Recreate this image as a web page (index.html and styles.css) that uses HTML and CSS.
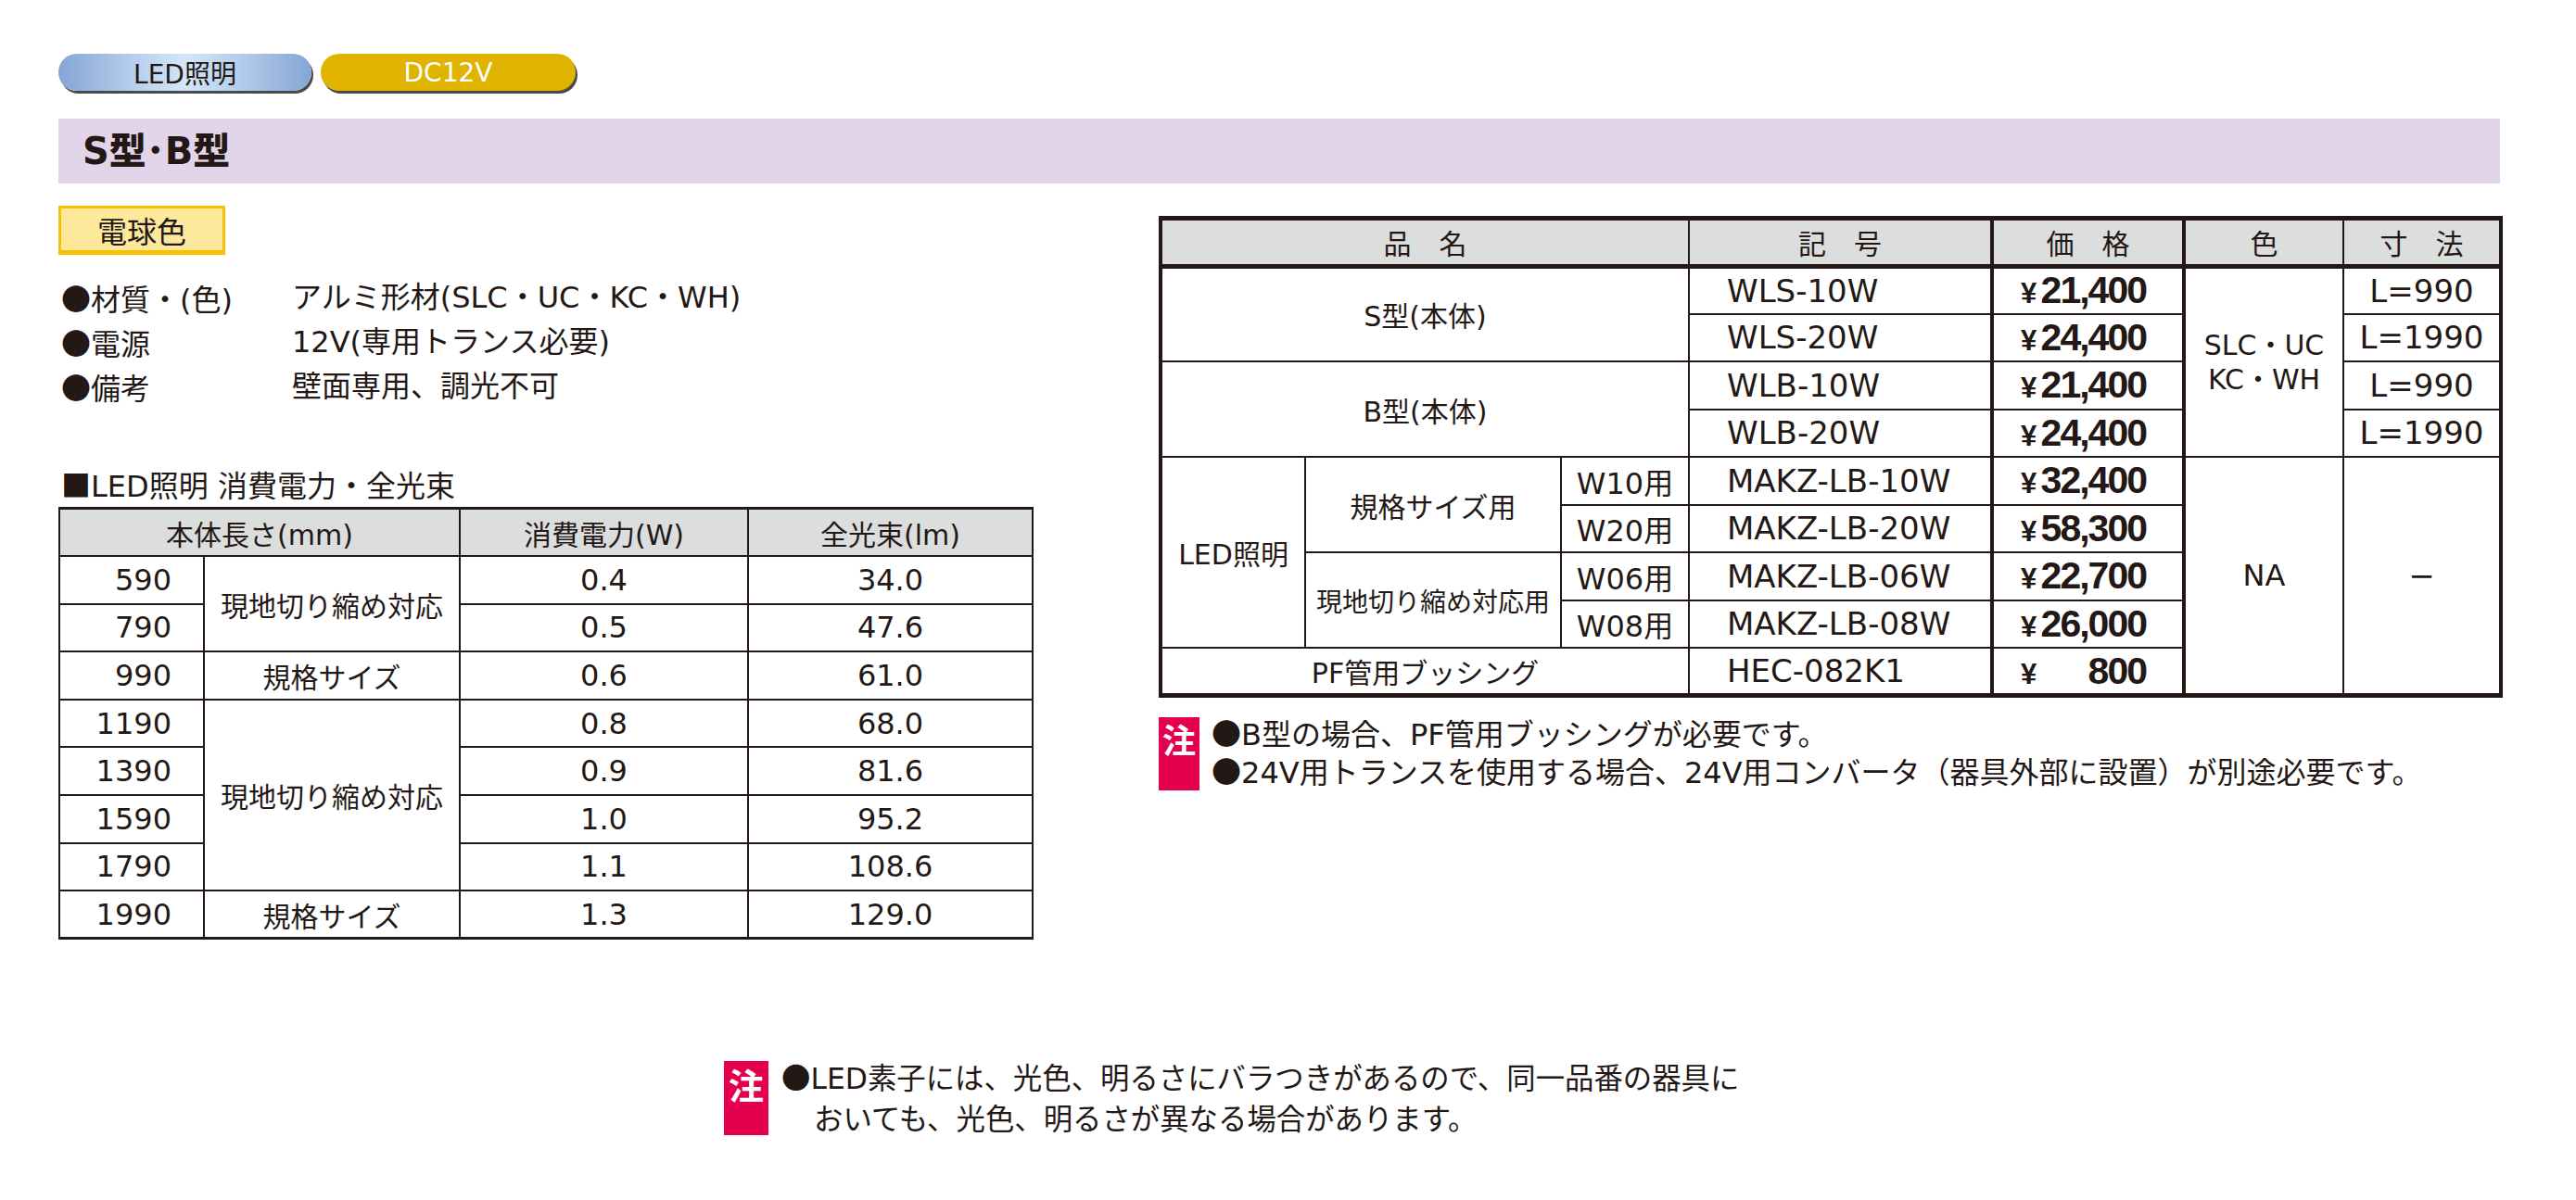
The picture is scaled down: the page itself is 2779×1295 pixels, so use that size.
FILE: index.html
```html
<!DOCTYPE html>
<html lang="ja">
<head>
<meta charset="utf-8">
<title>S型・B型</title>
<link rel="stylesheet" href="styles.css">
</head>
<body>
<div class="page">
  <div class="tags">
    <span class="pill pill-led">LED照明</span>
    <span class="pill pill-dc">DC12V</span>
  </div>
  <div class="band"><h1>S型･B型</h1></div>

  <div class="main">
    <div class="left">
      <div class="badge">電球色</div>
      <div class="spec">
        <span><span class="b">●</span>材質・(色)</span><span>アルミ形材(SLC・UC・KC・WH)</span>
        <span><span class="b">●</span>電源</span><span>12V(専用トランス必要)</span>
        <span><span class="b">●</span>備考</span><span>壁面専用、調光不可</span>
      </div>
      <h2><span class="b">■</span>LED照明 消費電力・全光束</h2>
      <table class="t1">
        <colgroup><col class="a1"><col class="a2"><col class="a3"><col class="a4"></colgroup>
        <thead>
          <tr><th colspan="2">本体長さ(mm)</th><th>消費電力(W)</th><th>全光束(lm)</th></tr>
        </thead>
        <tbody>
          <tr><td class="len">590</td><td rowspan="2">現地切り縮め対応</td><td class="n">0.4</td><td class="n">34.0</td></tr>
          <tr><td class="len">790</td><td class="n">0.5</td><td class="n">47.6</td></tr>
          <tr><td class="len">990</td><td>規格サイズ</td><td class="n">0.6</td><td class="n">61.0</td></tr>
          <tr><td class="len">1190</td><td rowspan="4">現地切り縮め対応</td><td class="n">0.8</td><td class="n">68.0</td></tr>
          <tr><td class="len">1390</td><td class="n">0.9</td><td class="n">81.6</td></tr>
          <tr><td class="len">1590</td><td class="n">1.0</td><td class="n">95.2</td></tr>
          <tr><td class="len">1790</td><td class="n">1.1</td><td class="n">108.6</td></tr>
          <tr><td class="len">1990</td><td>規格サイズ</td><td class="n">1.3</td><td class="n">129.0</td></tr>
        </tbody>
      </table>
    </div>

    <div class="right">
      <table class="t2">
        <colgroup><col class="k1"><col class="k2"><col class="k3"><col class="k4"><col class="k5"><col class="k6"><col class="k7"></colgroup>
        <thead>
          <tr><th colspan="3">品　名</th><th>記　号</th><th class="price">価　格</th><th>色</th><th>寸　法</th></tr>
        </thead>
        <tbody>
          <tr><td colspan="3" rowspan="2">S型(本体)</td><td class="code">WLS-10W</td><td class="price"><div class="pr"><span class="yen">¥</span><span class="amt">21,400</span></div></td><td rowspan="4" class="color">SLC・UC<br>KC・WH</td><td class="sz">L=990</td></tr>
          <tr><td class="code">WLS-20W</td><td class="price"><div class="pr"><span class="yen">¥</span><span class="amt">24,400</span></div></td><td class="sz">L=1990</td></tr>
          <tr><td colspan="3" rowspan="2">B型(本体)</td><td class="code">WLB-10W</td><td class="price"><div class="pr"><span class="yen">¥</span><span class="amt">21,400</span></div></td><td class="sz">L=990</td></tr>
          <tr><td class="code">WLB-20W</td><td class="price"><div class="pr"><span class="yen">¥</span><span class="amt">24,400</span></div></td><td class="sz">L=1990</td></tr>
          <tr><td rowspan="4">LED照明</td><td rowspan="2">規格サイズ用</td><td class="w">W10用</td><td class="code">MAKZ-LB-10W</td><td class="price"><div class="pr"><span class="yen">¥</span><span class="amt">32,400</span></div></td><td rowspan="5" class="na">NA</td><td rowspan="5" class="sz">−</td></tr>
          <tr><td class="w">W20用</td><td class="code">MAKZ-LB-20W</td><td class="price"><div class="pr"><span class="yen">¥</span><span class="amt">58,300</span></div></td></tr>
          <tr><td rowspan="2" class="tight">現地切り縮め対応用</td><td class="w">W06用</td><td class="code">MAKZ-LB-06W</td><td class="price"><div class="pr"><span class="yen">¥</span><span class="amt">22,700</span></div></td></tr>
          <tr><td class="w">W08用</td><td class="code">MAKZ-LB-08W</td><td class="price"><div class="pr"><span class="yen">¥</span><span class="amt">26,000</span></div></td></tr>
          <tr><td colspan="3">PF管用ブッシング</td><td class="code">HEC-082K1</td><td class="price"><div class="pr"><span class="yen">¥</span><span class="amt">800</span></div></td></tr>
        </tbody>
      </table>
      <div class="note note-r">
        <span class="chu">注</span>
        <div class="lines">
          <div class="ln"><span class="b">●</span>B型の場合、PF管用ブッシングが必要です。</div>
          <div class="ln"><span class="b">●</span>24V用トランスを使用する場合、24V用コンバータ（器具外部に設置）が別途必要です。</div>
        </div>
      </div>
    </div>
  </div>

  <div class="note note-b">
    <span class="chu">注</span>
    <div class="lines">
      <div class="ln"><span class="b">●</span>LED素子には、光色、明るさにバラつきがあるので、同一品番の器具に</div>
      <div class="ln indent">おいても、光色、明るさが異なる場合があります。</div>
    </div>
  </div>
</div>
</body>
</html>
```

FILE: styles.css
```css
body {
  margin: 0;
  background: #ffffff;
  color: #231815;
  font-family: "DejaVu Sans", "Noto Sans CJK JP", sans-serif;
}

.page {
  padding: 58px 0 60px 63px;
  width: 2634px;
}

.b {
  font-family: "Noto Sans CJK JP", sans-serif;
}

/* top tags */
.tags {
  display: flex;
  gap: 10px;
  height: 40px;
}
.pill {
  width: 273px;
  height: 40px;
  border-radius: 20px;
  display: flex;
  align-items: center;
  justify-content: center;
  font-size: 28px;
  box-shadow: 2px 3px 0 #4a4a4a;
}
.pill-led {
  background: linear-gradient(90deg, #86a5d5 0%, #b7cfec 30%, #d4e5f6 50%, #b7cfec 70%, #86a5d5 100%);
  color: #231815;
}
.pill-dc {
  width: 275px;
  background: #dfb300;
  color: #ffffff;
}

/* title band */
.band {
  margin-top: 30px;
  height: 70px;
  background: #e3d5e9;
  display: flex;
  align-items: center;
  padding-left: 26px;
}
.band h1 {
  margin: 0;
  font-size: 40px;
  font-weight: 900;
  line-height: 1;
}

.main {
  display: flex;
  gap: 135px;
}
.left {
  width: 1053px;
  padding-top: 24px;
}
.right {
  width: 1450px;
  padding-top: 35px;
}

/* badge */
.badge {
  width: 180px;
  height: 53px;
  box-sizing: border-box;
  border: 3px solid #f6c100;
  border-bottom-width: 5px;
  background: #fde89c;
  display: flex;
  align-items: center;
  justify-content: center;
  font-size: 32px;
}

/* spec list */
.spec {
  margin: 22px 0 0 3px;
  display: grid;
  grid-template-columns: 249px auto;
  grid-auto-rows: 48px;
  align-items: center;
  font-size: 32px;
  line-height: 40px;
}
.spec > span {
  height: 40px;
  white-space: nowrap;
}

.left h2 {
  margin: 61px 0 5px 3px;
  height: 40px;
  font-size: 32px;
  font-weight: 400;
  line-height: 40px;
  white-space: nowrap;
}

/* tables */
table {
  border-collapse: collapse;
  table-layout: fixed;
}
th, td {
  padding: 0;
  text-align: center;
  vertical-align: middle;
  white-space: nowrap;
  font-weight: 400;
}

.t1 {
  width: 1050px;
  border-top: 3px solid #231815;
  border-bottom: 3px solid #231815;
  font-size: 30px;
}
.t1 th, .t1 td {
  border: 2px solid #231815;
}
.t1 th {
  background: #dcdddd;
}
.t1 tr {
  height: 51.6px;
}
.t1 .a1 { width: 156px; }
.t1 .a2 { width: 276px; }
.t1 .a3 { width: 311px; }
.t1 .a4 { width: 307px; }
.t1 .len {
  text-align: right;
  padding-right: 34px;
  font-size: 32px;
}
.t1 .n {
  font-size: 32px;
}

.t2 {
  width: 1446px;
  border-top: 5px solid #231815;
  border-bottom: 5px solid #231815;
  border-left: 4px solid #231815;
  border-right: 4px solid #231815;
  font-size: 30px;
}
.t2 th, .t2 td {
  border: 2.5px solid #231815;
}
.t2 th {
  background: #dcdddd;
  border-bottom: 5px solid #231815;
}
.t2 tr {
  height: 51.5px;
}
.t2 .k1 { width: 156px; }
.t2 .k2 { width: 276px; }
.t2 .k3 { width: 138px; }
.t2 .k4 { width: 327px; }
.t2 .k5 { width: 207px; }
.t2 .k6 { width: 172px; }
.t2 .k7 { width: 170px; }

.t2 .price {
  border-left: 4px solid #231815;
  border-right: 4px solid #231815;
}
.t2 .code {
  text-align: left;
  padding-left: 40px;
  font-size: 34px;
}
.t2 .sz {
  font-size: 34px;
}
.t2 .w {
  font-size: 32px;
}
.t2 .na {
  font-size: 32px;
}
.t2 .tight {
  font-size: 28px;
}
.t2 .color {
  line-height: 37px;
}

.pr {
  display: flex;
  justify-content: space-between;
  align-items: baseline;
  padding: 0 41px 0 29px;
  font-family: "Liberation Sans", Arial, sans-serif;
  font-weight: 700;
}
.yen {
  font-size: 31px;
}
.amt {
  font-size: 41px;
  letter-spacing: -2px;
  margin-right: -2px;
}

/* notes */
.note {
  display: flex;
  align-items: flex-start;
}
.ln {
  white-space: nowrap;
}
.chu {
  flex: none;
  background: #e4004f;
  color: #ffffff;
  font-family: "Noto Sans CJK JP", sans-serif;
  font-weight: 700;
  display: flex;
  justify-content: center;
}
.note-r {
  margin-top: 17px;
}
.note-r .chu {
  width: 44px;
  height: 79px;
  margin-top: 4px;
  font-size: 36px;
  line-height: 46px;
}
.note-r .lines {
  margin-left: 13px;
  font-size: 32px;
}
.note-r .ln {
  height: 41px;
  line-height: 41px;
}

.note-b {
  margin: 125px 0 0 718px;
}
.note-b .chu {
  width: 48px;
  height: 80px;
  margin-top: 6px;
  font-size: 38px;
  line-height: 50px;
}
.note-b .lines {
  margin-left: 14px;
  font-size: 31.4px;
}
.note-b .ln {
  height: 46px;
  line-height: 46px;
}
.note-b .indent {
  padding-left: 35px;
}
```
